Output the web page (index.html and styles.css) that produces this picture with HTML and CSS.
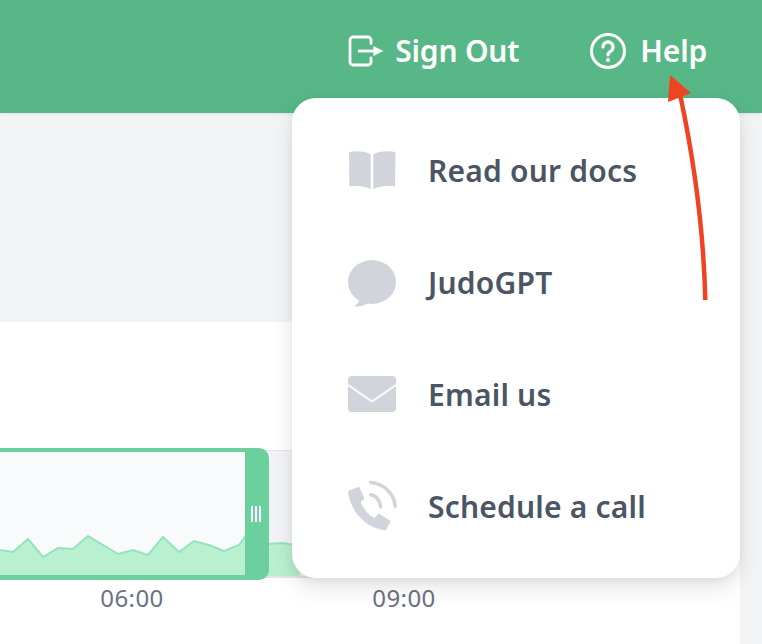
FILE: index.html
```html
<!DOCTYPE html>
<html lang="en">
<head>
  <meta charset="UTF-8">
  <meta name="viewport" content="width=device-width, initial-scale=1.0">
  <title>Help menu</title>
  <link rel="stylesheet" href="styles.css">
</head>
<body>
  <header class="topbar">
    <a class="nav-link nav-signout">
      <svg class="nav-icon" viewBox="0 0 36 36" fill="none" stroke="#fff" stroke-width="2.800" stroke-linejoin="round" stroke-linecap="round">
        <path d="M23 10.500V7a3 3 0 0 0-3-3H5a3 3 0 0 0-3 3v22a3 3 0 0 0 3 3h15a3 3 0 0 0 3-3V25"/>
        <path d="M10 18h16" stroke-linecap="butt"/>
        <path d="M25.300 13l10 5-10 5z" fill="#fff" stroke="none"/>
      </svg>
      <span>Sign Out</span>
    </a>
    <a class="nav-link nav-help">
      <svg class="nav-icon" viewBox="0 0 36 36" fill="none" stroke="#fff" stroke-width="3" stroke-linecap="round">
        <circle cx="18" cy="18" r="16.500"/>
        <path d="M13 14a5 5 0 1 1 7.600 4.300c-1.700 1-2.600 1.900-2.600 3.700" stroke-width="3.200"/>
        <circle cx="18" cy="27" r="2" fill="#fff" stroke="none"/>
      </svg>
      <span>Help</span>
    </a>
  </header>

  <main class="content">
    <section class="card">
      <div class="chart">
        <svg class="chart-svg" viewBox="0 0 720 128">
          <rect x="0" y="0" width="245" height="128" fill="#f9fafc"/>
          <rect x="245" y="0" width="475" height="128" fill="#f3f4f7"/>
          <path d="M0 0H720M0 127H720" stroke="#e3e5e9" stroke-width="2"/>
          <path d="M0 100L13 102L28 89L43 107L58 98L73 99L88 86L118 104L133 100L148 105L163 87L179 102L194 91L209 95L224 101L239 95L245 87L268 94L283 93L300 96V126H0Z" fill="#b8f0d0"/>
          <path d="M0 100L13 102L28 89L43 107L58 98L73 99L88 86L118 104L133 100L148 105L163 87L179 102L194 91L209 95L224 101L239 95L245 87L268 94L283 93L300 96" fill="none" stroke="#93e4bb" stroke-width="2"/>
        </svg>
        <div class="selection">
          <div class="selection-window"></div>
          <div class="selection-handle">
            <span class="grip"></span>
            <span class="grip"></span>
            <span class="grip"></span>
          </div>
        </div>
      </div>
      <div class="axis">
        <span class="tick">06:00</span>
        <span class="tick">09:00</span>
      </div>
    </section>
  </main>

  <div class="help-menu">
    <a class="menu-item">
      <svg class="menu-icon" viewBox="0 0 48 48" fill="#d1d5db">
        <path d="M1 5C9 3.500 17 3.800 22.700 7.500V42.500C17 39 9 38.500 1.300 39.500Z"/>
        <path d="M47.500 5C39.500 3.500 31 3.800 25.300 7.500V42.500C31 39 39 38.500 47 39.500Z"/>
      </svg>
      <span>Read our docs</span>
    </a>
    <a class="menu-item">
      <svg class="menu-icon" viewBox="0 0 48 48" fill="#d1d5db">
        <ellipse cx="24" cy="23" rx="24" ry="22"/>
        <path d="M9 36L12 40C10.500 43 9 46 6 47.500C10 48 15 47 20 44Z"/>
      </svg>
      <span>JudoGPT</span>
    </a>
    <a class="menu-item">
      <svg class="menu-icon" viewBox="0 0 48 48">
        <rect x="0" y="5" width="48" height="36" rx="3.500" fill="#d1d5db"/>
        <path d="M0 14L22.500 29.500Q24 30.500 25.500 29.500L48 14" fill="none" stroke="#fff" stroke-width="2"/>
      </svg>
      <span>Email us</span>
    </a>
    <a class="menu-item">
      <svg class="menu-icon" viewBox="0 0 48 48" fill="#d1d5db">
        <path d="M0.500 8.300L11 4.300L16 15.700L12 19C15 26 20 32 26 35.700L31 31L42 38.300L37.700 46.700C18 45 3 29 0.500 8.300Z" stroke="#d1d5db" stroke-width="1" stroke-linejoin="round"/>
        <path d="M22.700 -0.500C36 0.500 46.500 11 47.200 23.300" fill="none" stroke="#d1d5db" stroke-width="3.500" stroke-linecap="round"/>
        <path d="M22.700 11.700C28 12.500 32 17.500 32.700 24" fill="none" stroke="#d1d5db" stroke-width="3.500" stroke-linecap="round"/>
      </svg>
      <span>Schedule a call</span>
    </a>
  </div>

  <svg class="annotation" viewBox="0 0 60 240">
    <path d="M45.300 226C44 170 38 105 20 20" fill="none" stroke="#ee4423" stroke-width="4.500"/>
    <path d="M10 1L31 19L8 28Z" fill="#ee4423"/>
  </svg>
</body>
</html>
```

FILE: styles.css
```css
body {
  position: relative;
  width: 762px;
  height: 644px;
  margin: 0;
  overflow: hidden;
  background-color: #f3f4f6;
  font-family: "Noto Sans", Arial, sans-serif;
}
.topbar {
  display: flex;
  justify-content: flex-end;
  align-items: center;
  height: 113px;
  padding: 0 55px 12px 0;
  box-sizing: border-box;
  background-color: #57b787;
  box-shadow: 0 1px 4px rgba(0, 0, 0, 0.08);
}
.nav-link {
  display: flex;
  align-items: center;
  color: #ffffff;
  font-size: 30px;
  font-weight: 600;
  letter-spacing: -0.2px;
  line-height: 36px;
}
.nav-signout {
  gap: 11px;
  margin-right: 71px;
}
.nav-help {
  gap: 14px;
}
.nav-icon {
  width: 36px;
  height: 36px;
}
.content {
  padding: 209px 22px 0 0;
}
.card {
  height: 322px;
  padding-top: 128px;
  box-sizing: border-box;
  background: #ffffff;
}
.chart {
  position: relative;
  height: 128px;
}
.chart-svg {
  display: block;
  width: 720px;
  height: 128px;
}
.selection {
  position: absolute;
  top: -2px;
  left: 0;
  display: flex;
  width: 269px;
  height: 132px;
}
.selection-window {
  flex: 1;
  border-top: 4px solid #6cd09e;
  border-bottom: 5px solid #6cd09e;
}
.selection-handle {
  display: flex;
  justify-content: center;
  align-items: center;
  gap: 2px;
  width: 24px;
  padding-right: 2px;
  box-sizing: border-box;
  background-color: #6cd09e;
  border-radius: 0 10px 10px 0;
}
.grip {
  width: 2px;
  height: 16px;
  background-color: #ffffff;
}
.axis {
  display: flex;
  gap: 72px;
  padding: 5px 0 0 32px;
}
.tick {
  width: 200px;
  text-align: center;
  color: #6b7280;
  font-size: 24px;
  letter-spacing: 0.4px;
  line-height: 30px;
}
.help-menu {
  position: absolute;
  top: 98px;
  left: 292px;
  width: 448px;
  padding: 16px 0;
  box-sizing: border-box;
  background: #ffffff;
  border-radius: 24px;
  box-shadow: 0 10px 24px rgba(0, 0, 0, 0.1), 0 4px 8px rgba(0, 0, 0, 0.05);
}
.menu-item {
  display: flex;
  align-items: center;
  gap: 32px;
  height: 112px;
  padding-left: 56px;
  color: #4b5563;
  font-size: 30px;
  font-weight: 600;
  letter-spacing: 0.2px;
}
.menu-icon {
  flex: none;
  width: 48px;
  height: 48px;
  margin-top: 2px;
  overflow: visible;
}
.annotation {
  position: absolute;
  top: 74px;
  left: 660px;
  width: 60px;
  height: 240px;
}
```
